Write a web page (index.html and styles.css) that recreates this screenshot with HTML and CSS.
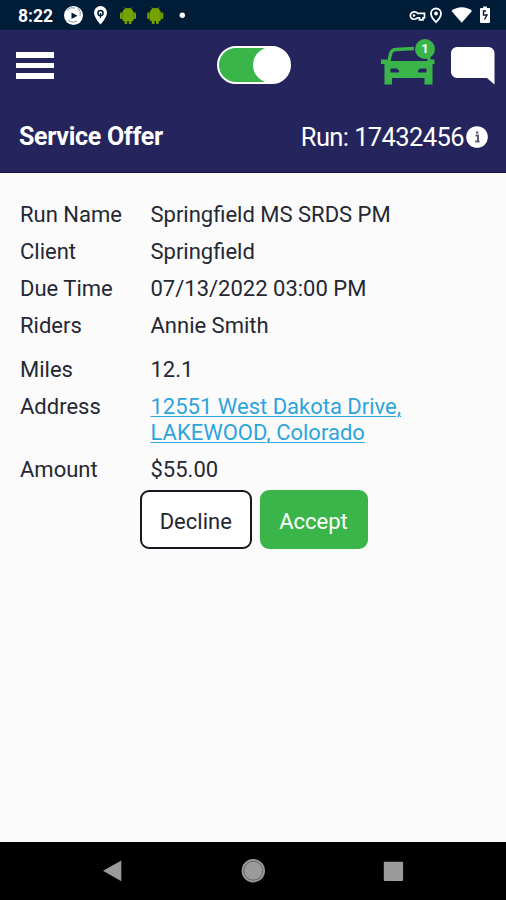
FILE: index.html
```html
<!DOCTYPE html>
<html lang="en">
<head>
<meta charset="utf-8">
<title>Service Offer</title>
<link rel="stylesheet" href="styles.css">
</head>
<body>
<div class="status">
  <span class="clock">8:22</span>
  <svg class="status-left" width="125" height="30" viewBox="0 0 125 30">
    <circle cx="9.500" cy="15.500" r="9.500" fill="#fff"/>
    <path d="M3 10a8 8 0 0 1 8-2M14 8a8 8 0 0 1 2 8M13 21a8 8 0 0 1-9-1" fill="none" stroke="#8c99a6" stroke-width="1"/>
    <path d="M7.500 12.500v6.500l6-3.300z" fill="#001c36"/>
    <path d="M36.500 6a6.500 6.500 0 0 0-6.500 6.500c0 5 6.500 12 6.500 12s6.500-7 6.500-12A6.500 6.500 0 0 0 36.500 6z" fill="#fff"/>
    <circle cx="36.500" cy="13" r="2.600" fill="none" stroke="#001c36" stroke-width="1.500"/>
    <path d="M36.500 13v5" stroke="#001c36" stroke-width="1.200"/>
    <g id="droid" fill="#76a200">
      <path d="M58.500 13a5.500 5 0 0 1 11 0v7a1 1 0 0 1-1 1h-9a1 1 0 0 1-1-1z"/>
      <rect x="56" y="12.500" width="16" height="6.500" rx="1"/>
      <rect x="60.500" y="20" width="2.800" height="4" rx="1"/>
      <rect x="64.700" y="20" width="2.800" height="4" rx="1"/>
      <path d="M60.500 7.500l1.500 2.500M67.500 7.500l-1.500 2.500" stroke="#76a200" stroke-width="1"/>
      <path d="M58.200 13v6M69.800 13v6" stroke="#3d6020" stroke-width=".6"/>
    </g>
    <use href="#droid" x="27.300"/>
    <circle cx="118.300" cy="15.300" r="2.700" fill="#fff"/>
  </svg>
  <svg class="status-right" width="86" height="30" viewBox="0 0 86 30">
    <path d="M12.500 13.300a4 3.700 0 1 0 0 4.500h2v2h3.500v-2h1.500v-4.500z" fill="none" stroke="#fff" stroke-width="1.700"/>
    <circle cx="9" cy="15.500" r="1.300" fill="#fff"/>
    <path d="M31 8.500a5 5 0 0 0-5 5c0 3.800 5 8.700 5 8.700s5-4.900 5-8.700a5 5 0 0 0-5-5z" fill="none" stroke="#fff" stroke-width="1.800"/>
    <circle cx="31" cy="13.500" r="1.900" fill="#fff"/>
    <path d="M46.500 11c5.500-5 15-5 20.500 0L56.700 22.700z" fill="#fff"/>
    <path d="M76 8h2.200V6.500h3.600V8H84a1 1 0 0 1 1 1V22a1 1 0 0 1-1 1h-8a1 1 0 0 1-1-1V9a1 1 0 0 1 1-1z" fill="#fff"/>
    <path d="M81 11h-2.500v4h3.500l-2.500 4.500" fill="none" stroke="#001c36" stroke-width="1.400"/>
  </svg>
</div>
<header class="header">
  <div class="toolbar">
    <div class="menu"><i></i><i></i><i></i></div>
    <div class="toggle"><span class="knob"></span></div>
    <div class="car">
      <svg width="56" height="44" viewBox="0 0 56 44">
        <path d="M9 20l1.500-7q1.200-4.500 5.500-4.500l18-1" fill="none" stroke="#3ab54a" stroke-width="3.400"/>
        <path d="M48 13l1.500 8" stroke="#3ab54a" stroke-width="3.500"/>
        <path fill-rule="evenodd" d="M1 18.500h6l2 1.500h39l2-1.500h4.500V23H52.500V43.500H44.500V37H12V43.500H4.500V23H1zM10.500 27.500v4h8.500v-2l-2-2zM46.500 27.500v4h-8.500v-2l2-2z" fill="#3ab54a"/>
      </svg>
      <span class="badge">1</span>
    </div>
    <svg class="chat" width="46" height="40" viewBox="0 0 46 40">
      <path d="M7 1H38.500a6 6 0 0 1 6 6V38.500L37 32H7a6 6 0 0 1-6-6V7a6 6 0 0 1 6-6z" fill="#fff"/>
    </svg>
  </div>
  <div class="titlebar">
    <h1 class="title">Service Offer</h1>
    <span class="run">Run: 17432456</span>
    <svg class="info" width="22" height="22" viewBox="0 0 22 22">
      <circle cx="11" cy="11" r="10.800" fill="#fff"/>
      <path d="M9.500 9.500h2.500V15M9.200 15.500h4.300M10 6.500h2.400" fill="none" stroke="#5e5d75" stroke-width="2"/>
    </svg>
  </div>
</header>
<main class="content">
  <dl class="details">
    <dt>Run Name</dt><dd>Springfield MS SRDS PM</dd>
    <dt>Client</dt><dd>Springfield</dd>
    <dt>Due Time</dt><dd>07/13/2022 03:00 PM</dd>
    <dt class="riders">Riders</dt><dd class="riders">Annie Smith</dd>
    <dt>Miles</dt><dd>12.1</dd>
    <dt>Address</dt><dd><a class="address" href="#">12551 West Dakota Drive,<br>LAKEWOOD, Colorado</a></dd>
    <dt>Amount</dt><dd>$55.00</dd>
  </dl>
  <div class="actions">
    <button class="btn decline">Decline</button>
    <button class="btn accept">Accept</button>
  </div>
</main>
<nav class="nav">
  <svg width="506" height="58" viewBox="0 0 506 58">
    <path d="M103 28.800L121.300 18.500V39.200z" fill="#9b9b9b"/>
    <circle cx="253.300" cy="28.700" r="11.700" fill="#9b9b9b"/>
    <circle cx="253.300" cy="28.700" r="9.500" fill="none" stroke="#555" stroke-width=".8"/>
    <rect x="383.800" y="19.700" width="19.300" height="19.300" rx="1" fill="#9b9b9b"/>
  </svg>
</nav>
</body>
</html>
```
FILE: styles.css
```css
* { box-sizing: border-box; }
body {
  margin: 0;
  height: 900px;
  display: flex;
  flex-direction: column;
  overflow: hidden;
  background: #fbfbfb;
  color: #252733;
  font-family: Roboto, sans-serif;
}
svg { display: block; flex: none; }
.status {
  height: 30px;
  background: #001c36;
  color: #fff;
  display: flex;
  align-items: center;
  padding: 0 15px 0 18px;
}
.clock { width: 46px; font-size: 17.500px; font-weight: 700; line-height: 30px; padding-top: 2px; }
.status-right { margin-left: auto; }
.header {
  height: 143px;
  background: #26245d;
  border-bottom: 1px solid #15104c;
  color: #fff;
}
.toolbar { height: 70px; display: flex; align-items: flex-start; padding-left: 16px; }
.menu { width: 38px; margin-top: 22px; display: grid; gap: 5px; }
.menu i { height: 5.500px; background: #fff; }
.toggle {
  width: 74px;
  height: 38px;
  margin: 15.500px 0 0 163px;
  border: 2px solid #fff;
  border-radius: 19px;
  background: #3ab54a;
  display: flex;
  justify-content: flex-end;
}
.knob { width: 37px; height: 36px; margin: -1px -1px 0 0; border-radius: 50%; background: #fff; }
.car { position: relative; margin: 11px 0 0 89px; }
.badge {
  position: absolute;
  left: 35px;
  top: -2px;
  width: 20px;
  height: 20px;
  border-radius: 50%;
  background: #3ab54a;
  font-size: 13px;
  font-weight: 700;
  line-height: 20px;
  text-align: center;
}
.chat { margin: 16px 0 0 14px; }
.titlebar { height: 72px; display: flex; align-items: center; padding: 1px 18px 0 19px; }
.title { margin: 0; font-size: 25px; font-weight: 700; letter-spacing: -.3px; }
.run { margin-left: auto; font-size: 25.500px; letter-spacing: -.6px; }
.info { margin-left: 2px; }
.content { flex: 1; padding: 29px 20px 0; }
.details {
  margin: 0;
  display: grid;
  grid-template-columns: 130px 1fr;
  row-gap: 11px;
  font-size: 22px;
  line-height: 26px;
}
.details dd { margin: 0; padding-left: .5px; }
.details .riders { margin-bottom: 7px; }
.address { color: #2ea4dc; text-decoration-thickness: 1px; text-underline-offset: 2px; }
.actions { display: flex; gap: 8px; margin: 7px 0 0 120px; }
.btn {
  width: 111.500px;
  height: 59px;
  padding: 3px 0 0;
  border: 2px solid #181820;
  border-radius: 9px;
  background: #fff;
  color: #252733;
  font: 22px Roboto, sans-serif;
}
.accept { width: 108px; border-color: #3ab54a; background: #3ab54a; color: #fff; }
.nav { height: 58px; background: #000; }
```
